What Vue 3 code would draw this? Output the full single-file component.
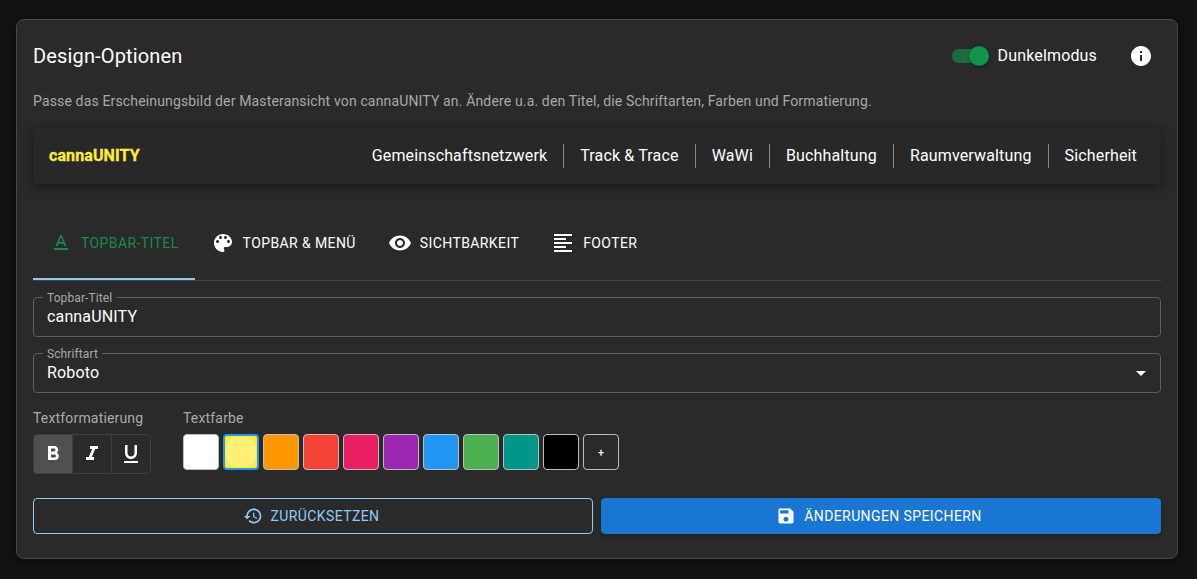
<script setup>
import { ref } from 'vue'

const title = ref('cannaUNITY')
const font = ref('Roboto')

const menuItems = ['Gemeinschaftsnetzwerk', 'Track & Trace', 'WaWi', 'Buchhaltung', 'Raumverwaltung', 'Sicherheit']

const tabs = [
  { label: 'Topbar-Titel', icon: 'M5 17v2h14v-2H5zm4.5-4.2h5l.9 2.2h2.1L12.75 4h-1.5L6.5 15h2.1l.9-2.2zM12 5.98 13.87 11h-3.74L12 5.98z', active: true },
  { label: 'Topbar & Menü', icon: 'M12 3c-4.97 0-9 4.03-9 9s4.03 9 9 9c.83 0 1.5-.67 1.5-1.5 0-.39-.15-.74-.39-1.01-.23-.26-.38-.61-.38-.99 0-.83.67-1.5 1.5-1.5H16c2.76 0 5-2.24 5-5 0-4.42-4.03-8-9-8zm-5.5 9c-.83 0-1.5-.67-1.5-1.5S5.67 9 6.5 9 8 9.67 8 10.5 7.33 12 6.5 12zm3-4C8.67 8 8 7.33 8 6.5S8.67 5 9.5 5s1.5.67 1.5 1.5S10.33 8 9.5 8zm5 0c-.83 0-1.5-.67-1.5-1.5S13.67 5 14.5 5s1.5.67 1.5 1.5S15.33 8 14.5 8zm3 4c-.83 0-1.5-.67-1.5-1.5S16.67 9 17.5 9s1.5.67 1.5 1.5-.67 1.5-1.5 1.5z' },
  { label: 'Sichtbarkeit', icon: 'M12 4.5C7 4.5 2.73 7.61 1 12c1.73 4.39 6 7.5 11 7.5s9.27-3.11 11-7.5c-1.73-4.39-6-7.5-11-7.5zM12 17c-2.76 0-5-2.24-5-5s2.24-5 5-5 5 2.24 5 5-2.24 5-5 5zm0-8c-1.66 0-3 1.34-3 3s1.34 3 3 3 3-1.34 3-3-1.34-3-3-3z' },
  { label: 'Footer', icon: 'M15 15H3v2h12v-2zm0-8H3v2h12V7zM3 13h18v-2H3v2zm0 8h18v-2H3v2zM3 3v2h18V3H3z' }
]

const formats = [
  { name: 'bold', active: true, icon: 'M15.6 10.79c.97-.67 1.65-1.77 1.65-2.79 0-2.26-1.75-4-4-4H7v14h7.04c2.09 0 3.71-1.7 3.71-3.79 0-1.52-.86-2.82-2.15-3.42zM10 6.5h3c.83 0 1.5.67 1.5 1.5s-.67 1.5-1.5 1.5h-3v-3zm3.5 9H10v-3h3.5c.83 0 1.5.67 1.5 1.5s-.67 1.5-1.5 1.5z' },
  { name: 'italic', icon: 'M10 4v3h2.21l-3.42 8H6v3h8v-3h-2.21l3.42-8H18V4z' },
  { name: 'underline', icon: 'M12 17c3.31 0 6-2.69 6-6V3h-2.5v8c0 1.93-1.57 3.5-3.5 3.5S8.5 12.93 8.5 11V3H6v8c0 3.31 2.69 6 6 6zm-7 2v2h14v-2H5z' }
]

const colors = ['#ffffff', '#ffeb3b', '#ff9800', '#f44336', '#e91e63', '#9c27b0', '#2196f3', '#4caf50', '#009688', '#000000']
const selectedColor = '#ffeb3b'
</script>

<template>
  <main class="page">
    <section class="card">
      <header class="card-head">
        <h1 class="card-title">Design-Optionen</h1>
        <div class="head-actions">
          <label class="switch">
            <span class="switch-track"></span>
            <span class="switch-thumb"></span>
          </label>
          <span class="switch-label">Dunkelmodus</span>
          <button class="info-btn" type="button" aria-label="Info">
            <svg viewBox="0 0 24 24" width="24" height="24"><path d="M12 2C6.48 2 2 6.48 2 12s4.48 10 10 10 10-4.48 10-10S17.52 2 12 2zm1 15h-2v-6h2v6zm0-8h-2V7h2v2z" /></svg>
          </button>
        </div>
      </header>

      <p class="intro">Passe das Erscheinungsbild der Masteransicht von cannaUNITY an. Ändere u.a. den Titel, die Schriftarten, Farben und Formatierung.</p>

      <div class="preview">
        <span class="preview-logo">{{ title }}</span>
        <nav class="preview-menu">
          <a v-for="item in menuItems" :key="item" class="preview-item">{{ item }}</a>
        </nav>
      </div>

      <div class="tabs">
        <button
          v-for="tab in tabs"
          :key="tab.label"
          class="tab"
          :class="{ 'tab-active': tab.active }"
          type="button"
        >
          <svg viewBox="0 0 24 24" width="24" height="24"><path :d="tab.icon" /></svg>
          <span>{{ tab.label }}</span>
        </button>
      </div>

      <fieldset class="field field-first">
        <legend>Topbar-Titel</legend>
        <span class="field-value">{{ title }}</span>
      </fieldset>

      <fieldset class="field field-select">
        <legend>Schriftart</legend>
        <span class="field-value">{{ font }}</span>
        <svg class="select-arrow" viewBox="0 0 24 24" width="24" height="24"><path d="M7 10l5 5 5-5z" /></svg>
      </fieldset>

      <div class="format-row">
        <div class="format-block">
          <div class="small-label">Textformatierung</div>
          <div class="toggle-group">
            <button
              v-for="f in formats"
              :key="f.name"
              class="toggle"
              :class="{ 'toggle-on': f.active }"
              type="button"
              :aria-label="f.name"
            >
              <svg viewBox="0 0 24 24" width="24" height="24"><path :d="f.icon" /></svg>
            </button>
          </div>
        </div>
        <div class="color-block">
          <div class="small-label">Textfarbe</div>
          <div class="swatches">
            <button
              v-for="c in colors"
              :key="c"
              class="swatch"
              :class="{ 'swatch-on': c === selectedColor }"
              :style="{ background: c }"
              type="button"
            ></button>
            <button class="swatch swatch-add" type="button">+</button>
          </div>
        </div>
      </div>

      <div class="actions">
        <button class="btn btn-outline" type="button">
          <svg viewBox="0 0 24 24" width="20" height="20"><path d="M13 3c-4.97 0-9 4.03-9 9H1l3.89 3.89.07.14L9 12H6c0-3.87 3.13-7 7-7s7 3.13 7 7-3.13 7-7 7c-1.93 0-3.68-.79-4.94-2.06l-1.42 1.42C8.27 19.99 10.51 21 13 21c4.97 0 9-4.03 9-9s-4.03-9-9-9zm-1 5v5l4.28 2.54.72-1.21-3.5-2.08V8H12z" /></svg>
          Zurücksetzen
        </button>
        <button class="btn btn-solid" type="button">
          <svg viewBox="0 0 24 24" width="20" height="20"><path d="M17 3H5c-1.11 0-2 .9-2 2v14c0 1.1.89 2 2 2h14c1.1 0 2-.9 2-2V7l-4-4zm-5 16c-1.66 0-3-1.34-3-3s1.34-3 3-3 3 1.34 3 3-1.34 3-3 3zm3-10H5V5h10v4z" /></svg>
          Änderungen speichern
        </button>
      </div>
    </section>
  </main>
</template>

<style>
html, body {
  margin: 0;
  background: #121212;
}
</style>

<style scoped>
.page {
  box-sizing: border-box;
  height: 579px;
  padding: 19px 19px 20px 16px;
  background: #121212;
  font-family: Roboto, "Liberation Sans", sans-serif;
  color: #fff;
  overflow: hidden;
}

.card {
  box-sizing: border-box;
  height: 540px;
  padding: 16px;
  background: #2a2a2a;
  border: 1px solid #484848;
  border-radius: 8px;
  box-shadow: 0 2px 10px rgba(0, 0, 0, 0.35);
}

.card-head {
  display: flex;
  align-items: center;
  justify-content: space-between;
  height: 40px;
}

.card-title {
  margin: 0;
  font-size: 20px;
  font-weight: 400;
  line-height: 40px;
  letter-spacing: 0.15px;
}

.head-actions {
  display: flex;
  align-items: center;
}

.switch {
  position: relative;
  display: block;
  width: 38px;
  height: 20px;
  margin-right: 9px;
}

.switch-track {
  position: absolute;
  left: 1px;
  top: 3px;
  width: 34px;
  height: 14px;
  border-radius: 7px;
  background: #1f6a40;
}

.switch-thumb {
  position: absolute;
  left: 18px;
  top: 0;
  width: 20px;
  height: 20px;
  border-radius: 50%;
  background: #0f9448;
  box-shadow: 0 1px 3px rgba(0, 0, 0, 0.4);
}

.switch-label {
  font-size: 16px;
  font-weight: 400;
  line-height: 24px;
  letter-spacing: 0.15px;
}

.info-btn {
  display: flex;
  align-items: center;
  justify-content: center;
  width: 40px;
  height: 40px;
  margin-left: 24px;
  padding: 0;
  border: 0;
  background: none;
  fill: #fff;
}

.intro {
  margin: 15px 0 0;
  font-size: 14px;
  line-height: 20px;
  letter-spacing: 0.15px;
  color: #a9a9a9;
}

.preview {
  display: flex;
  align-items: center;
  justify-content: space-between;
  height: 56px;
  margin-top: 17px;
  padding: 0 8px 0 16px;
  background: #282828;
  border-radius: 4px;
  box-shadow: 0 2px 8px rgba(0, 0, 0, 0.35), 0 4px 12px rgba(0, 0, 0, 0.15);
}

.preview-logo {
  font-size: 16px;
  font-weight: 700;
  letter-spacing: 0.1px;
  line-height: 22px;
  margin-bottom: 1px;
  color: #ffeb3b;
  -webkit-text-stroke: 0.3px #ffeb3b;
}

.preview-menu {
  display: flex;
  align-items: center;
}

.preview-item {
  padding: 0 16px;
  font-size: 16px;
  font-weight: 400;
  line-height: 24px;
  letter-spacing: 0.15px;
  white-space: nowrap;
  border-right: 1px solid #8a8a8a;
}

.preview-item:last-child {
  border-right: 0;
}

.tabs {
  display: flex;
  height: 73px;
  margin-top: 23px;
  border-bottom: 1px solid #444;
}

.tab {
  display: flex;
  align-items: center;
  gap: 8px;
  box-sizing: border-box;
  height: 73px;
  padding: 0 16px;
  border: 0;
  border-bottom: 2px solid transparent;
  background: none;
  color: #fff;
  fill: #fff;
  font-family: inherit;
  font-size: 14px;
  font-weight: 400;
  letter-spacing: 0.4px;
  text-transform: uppercase;
  white-space: nowrap;
}

.tab-active {
  color: #168a48;
  fill: #168a48;
  border-bottom-color: #90caf9;
}

.field {
  position: relative;
  box-sizing: border-box;
  display: flex;
  align-items: center;
  height: 40px;
  margin: 0;
  padding: 0 13px;
  border: 1px solid #5e5e5e;
  border-radius: 4px;
  min-width: 0;
}

.field legend {
  position: absolute;
  left: 9px;
  top: -7px;
  padding: 0 4px;
  background: #2a2a2a;
  font-size: 12px;
  line-height: 14px;
  letter-spacing: 0.1px;
  color: #a9a9a9;
}

.field-first {
  margin-top: 16px;
}

.field-select {
  margin-top: 16px;
}

.field-value {
  font-size: 16px;
  letter-spacing: 0.15px;
  line-height: 24px;
}

.select-arrow {
  position: absolute;
  right: 7px;
  top: 7px;
  fill: #fff;
}

.format-row {
  display: flex;
  gap: 32px;
  margin-top: 16px;
}

.small-label {
  height: 25px;
  font-size: 14px;
  line-height: 18px;
  letter-spacing: 0.17px;
  color: #a9a9a9;
}

.toggle-group {
  display: flex;
  box-sizing: border-box;
  width: 118px;
  height: 40px;
  border: 1px solid #3f3f3f;
  border-radius: 4px;
  overflow: hidden;
}

.toggle {
  display: flex;
  flex: 1;
  align-items: center;
  justify-content: center;
  padding: 0;
  border: 0;
  border-left: 1px solid #3f3f3f;
  background: none;
  fill: #fff;
}

.toggle:first-child {
  border-left: 0;
}

.toggle-on {
  background: #505050;
}

.swatches {
  display: flex;
  gap: 4px;
}

.swatch {
  box-sizing: border-box;
  display: flex;
  width: 36px;
  height: 36px;
  padding: 0;
  border: 1px solid #bdbdbd;
  border-radius: 4px;
}

.swatch-on {
  border: 2px solid #2196f3;
}

.swatch-on::after {
  content: '';
  flex: 1;
  margin: 1px;
  border-radius: 12px;
  background: #fff176;
}

.swatch-add {
  align-items: center;
  justify-content: center;
  background: transparent;
  color: #fff;
  font-family: inherit;
  font-size: 10px;
  font-weight: 500;
}

.actions {
  display: flex;
  gap: 8px;
  margin-top: 24px;
}

.btn {
  display: flex;
  flex: 1;
  align-items: center;
  justify-content: center;
  gap: 8px;
  box-sizing: border-box;
  height: 36px;
  padding: 0;
  border: 1px solid #90caf9;
  border-radius: 4px;
  font-family: inherit;
  font-size: 14px;
  font-weight: 400;
  letter-spacing: 0.4px;
  text-transform: uppercase;
}

.btn svg {
  margin-left: -4px;
}

.btn-outline {
  background: none;
  color: #90caf9;
  fill: #90caf9;
}

.btn-solid {
  border-color: #1976d2;
  background: #1976d2;
  color: #fff;
  fill: #fff;
  box-shadow: 0 2px 3px rgba(0, 0, 0, 0.3);
}
</style>
